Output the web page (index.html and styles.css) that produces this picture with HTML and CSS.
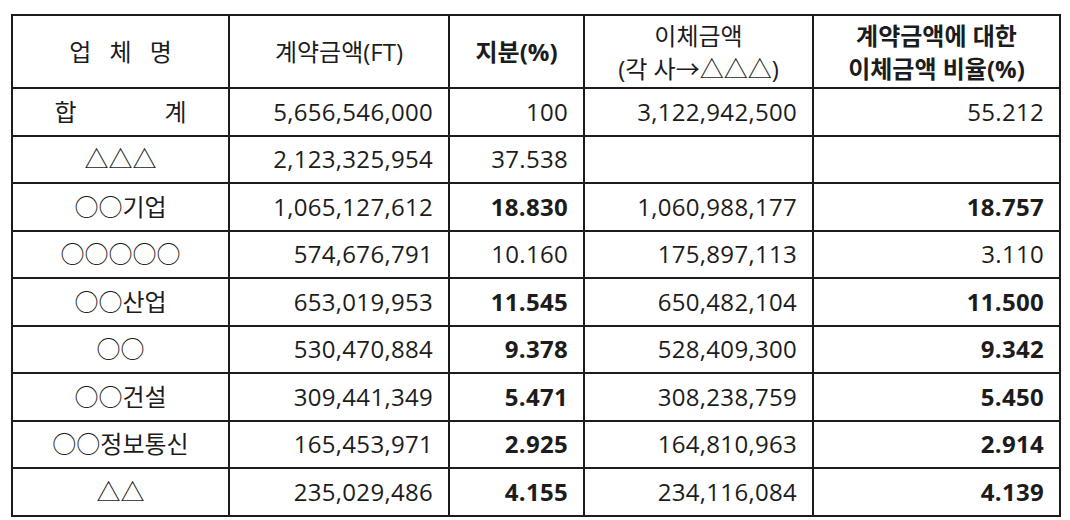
FILE: index.html
```html
<!DOCTYPE html>
<html lang="ko">
<head>
<meta charset="utf-8">
<title>이체금액 비율</title>
<link rel="stylesheet" href="styles.css">
</head>
<body>
<table class="sheet">
  <colgroup>
    <col class="c-name">
    <col class="c-amount">
    <col class="c-share">
    <col class="c-transfer">
    <col class="c-ratio">
  </colgroup>
  <thead>
    <tr class="head">
      <th class="spaced">업 체 명</th>
      <th>계약금액(FT)</th>
      <th class="strong">지분(%)</th>
      <th><div>이체금액</div><div>(각 사→△△△)</div></th>
      <th class="strong"><div>계약금액에 대한</div><div>이체금액 비율(%)</div></th>
    </tr>
  </thead>
  <tbody>
    <tr>
      <td class="name"><span class="justify"><span>합</span><span>계</span></span></td>
      <td class="num">5,656,546,000</td>
      <td class="num">100</td>
      <td class="num">3,122,942,500</td>
      <td class="num">55.212</td>
    </tr>
    <tr>
      <td class="name">△△△</td>
      <td class="num">2,123,325,954</td>
      <td class="num">37.538</td>
      <td class="num"></td>
      <td class="num"></td>
    </tr>
    <tr>
      <td class="name">○○기업</td>
      <td class="num">1,065,127,612</td>
      <td class="num strong">18.830</td>
      <td class="num">1,060,988,177</td>
      <td class="num strong">18.757</td>
    </tr>
    <tr>
      <td class="name">○○○○○</td>
      <td class="num">574,676,791</td>
      <td class="num">10.160</td>
      <td class="num">175,897,113</td>
      <td class="num">3.110</td>
    </tr>
    <tr>
      <td class="name">○○산업</td>
      <td class="num">653,019,953</td>
      <td class="num strong">11.545</td>
      <td class="num">650,482,104</td>
      <td class="num strong">11.500</td>
    </tr>
    <tr>
      <td class="name">○○</td>
      <td class="num">530,470,884</td>
      <td class="num strong">9.378</td>
      <td class="num">528,409,300</td>
      <td class="num strong">9.342</td>
    </tr>
    <tr>
      <td class="name">○○건설</td>
      <td class="num">309,441,349</td>
      <td class="num strong">5.471</td>
      <td class="num">308,238,759</td>
      <td class="num strong">5.450</td>
    </tr>
    <tr>
      <td class="name">○○정보통신</td>
      <td class="num">165,453,971</td>
      <td class="num strong">2.925</td>
      <td class="num">164,810,963</td>
      <td class="num strong">2.914</td>
    </tr>
    <tr>
      <td class="name">△△</td>
      <td class="num">235,029,486</td>
      <td class="num strong">4.155</td>
      <td class="num">234,116,084</td>
      <td class="num strong">4.139</td>
    </tr>
  </tbody>
</table>
</body>
</html>
```

FILE: styles.css
```css
html, body {
  margin: 0;
  padding: 0;
  background: #ffffff;
}

body {
  padding: 14px 0 0 11px;
  font-family: "Open Sans", "Noto Sans CJK KR", sans-serif;
  font-size: 24px;
  color: #1c1c1c;
}

.sheet {
  border-collapse: collapse;
  table-layout: fixed;
  width: 1050px;
}

.c-name { width: 217px; }
.c-amount { width: 220px; }
.c-share { width: 135px; }
.c-transfer { width: 229px; }
.c-ratio { width: 247px; }

.sheet th,
.sheet td {
  border: 2px solid #1c1c1c;
  padding: 0 15px;
  vertical-align: middle;
  white-space: nowrap;
  overflow: hidden;
}

.head {
  height: 73px;
}

.sheet th {
  font-weight: 400;
  text-align: center;
  line-height: 33px;
  padding: 0 4px;
}

.sheet tbody tr {
  height: 47.5px;
}

.sheet td {
  line-height: 30px;
}

.spaced {
  word-spacing: 12px;
}

.strong {
  font-weight: 700;
}

.sheet th.strong {
  font-weight: 700;
}

.name {
  text-align: center;
}

.justify {
  display: flex;
  justify-content: space-between;
  width: 132px;
  margin: 0 auto;
}

.num {
  text-align: right;
  letter-spacing: 0.3px;
}
```
